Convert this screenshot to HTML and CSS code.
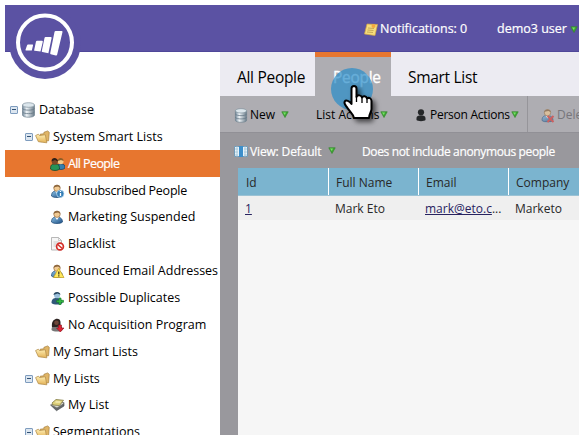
FILE: index.html
```
<!DOCTYPE html>
<html lang="en">
<head>
<meta charset="utf-8">
<title>Database</title>
<link rel="stylesheet" href="styles.css">
</head>
<body>
<svg class="defs" aria-hidden="true">
  <defs>
    <linearGradient id="metal"><stop offset="0" stop-color="#71879a"/><stop offset=".35" stop-color="#f0f5f8"/><stop offset="1" stop-color="#677987"/></linearGradient>
    <linearGradient id="gold" x2="0" y2="1"><stop offset="0" stop-color="#fff0b5"/><stop offset="1" stop-color="#e3b156"/></linearGradient>
    <linearGradient id="coat" x2="1" y2="1"><stop offset="0" stop-color="#8bc1e4"/><stop offset="1" stop-color="#1c4d84"/></linearGradient>
    <symbol id="db" viewBox="0 0 14 16"><path d="M1 3v10c0 3 12 3 12 0V3z" fill="url(#metal)" stroke="#718490" stroke-width=".7"/><ellipse cx="7" cy="3" rx="6" ry="2.3" fill="#dce6ec" stroke="#81929e" stroke-width=".7"/><path d="M1 6.500c1 2.200 11 2.200 12 0M1 10c1 2.200 11 2.200 12 0" fill="none" stroke="#637684" stroke-width=".8"/></symbol>
    <symbol id="folder" viewBox="0 0 16 14"><path d="M6 12 5.500 4l4-.5V2l4-1.500 1.700 1.500-.7 9z" fill="#e0b566" stroke="#a07a38" stroke-width=".7"/><path d="M.6 5.500 3.500 4l1.200 1.400L11 4.600l1.600 8.600-9-1.200z" fill="url(#gold)" stroke="#b18b48" stroke-width=".8"/></symbol>
    <symbol id="person" viewBox="0 0 14 14"><path d="M1 12c0-4 2-5 5-5s6 1 6 5c-2 2-9 2-11 0z" fill="url(#coat)" stroke="#194572" stroke-width=".7"/><path d="m4.500 7 2 3 2-3z" fill="#fff"/><circle cx="6.500" cy="4.200" r="3.200" fill="#f1ca93" stroke="#80572d" stroke-width=".6"/><path d="M3 4C3 .4 9.500-.4 10 3.800L7.500 2.500 4.500 3z" fill="#89633a"/></symbol>
    <symbol id="people" viewBox="0 0 15 14"><path d="M7 11c0-3 1-4 4-4s4 1 4 4c-2 2-6 2-8 0z" fill="#367fae" stroke="#173e61" stroke-width=".7"/><circle cx="10.700" cy="4.500" r="2.800" fill="#f4c888"/><path d="M7.700 4c0-4 6-4 6 0L11 3z" fill="#8e5e27"/><path d="M.5 12c0-4 1-5 4.500-5s4.500 1 4.500 5c-2 2-7 2-9 0z" fill="#269357" stroke="#103f29" stroke-width=".7"/><circle cx="4.800" cy="4.800" r="3" fill="#804927"/><path d="M1.500 4.500c0-5 6.500-4 6.500 0L5 3z" fill="#302018"/></symbol>
    <symbol id="info" viewBox="0 0 14 14"><use href="#person"/><circle cx="9.800" cy="9.800" r="3.700" fill="#367eb6" stroke="#c5e3f5" stroke-width=".7"/><path d="M10 9v3M10 7v1" stroke="#fff" stroke-width="1.300"/></symbol>
    <symbol id="blocked" viewBox="0 0 14 14"><path d="M1 .5h7l3 3V13H1z" fill="#f6f6f6" stroke="#a7a7a7" stroke-width=".8"/><path d="M8 .5v3h3M3 5h5M3 7h5M3 9h3" fill="none" stroke="#b9b9b9" stroke-width=".7"/><circle cx="9.500" cy="9.500" r="3.400" fill="#fff" stroke="#d52f2a" stroke-width="1.700"/><path d="m7.300 7.500 4.400 4" stroke="#d52f2a" stroke-width="1.500"/></symbol>
    <symbol id="warning" viewBox="0 0 14 14"><use href="#person"/><path d="M8.200 4.300 13.500 13.500H3z" fill="#ffe95c" stroke="#c7a52c" stroke-width=".8"/><path d="M8.300 7.500v3M8.300 11.200v1.300" stroke="#453b20" stroke-width="1.300"/></symbol>
    <symbol id="add" viewBox="0 0 14 14"><path d="M1 12c0-4 2-5 5-5s6 1 6 5c-2 2-9 2-11 0z" fill="#315879"/><circle cx="6.500" cy="4.200" r="3" fill="#9bc0dc"/><path d="M3 4C3 .4 9.500-.4 10 3.800L7 2.500z" fill="#29465e"/><path d="M8.500 7h2v2.300H13v2h-2.500v2.400h-2v-2.400H6.200v-2h2.300z" fill="#35ba43" stroke="#137925" stroke-width=".6"/></symbol>
    <symbol id="drop" viewBox="0 0 14 14"><path d="M1 12c0-4 2-5 5-5s6 1 6 5c-2 2-9 2-11 0z" fill="#777"/><path d="M1.500 9C0-.5 10-1.500 10 4v4L6 9z" fill="#2d2321"/><circle cx="6" cy="4.800" r="2.300" fill="#6e4639"/><path d="M8 7h3v3h2.500L9.800 14 6 10h2z" fill="#df2333" stroke="#8b121d" stroke-width=".6"/></symbol>
    <symbol id="list" viewBox="0 0 15 13"><path d="m.5 6.500 6 5.700L14 7.500V4L7 8z" fill="#65696b" stroke="#45494b" stroke-width=".6"/><path d="m1 6.500 6 3L14 5l-3-2z" fill="#d8d8d0" stroke="#66675e" stroke-width=".7"/><path d="m2 4.500 4-3.500 7.500.800L9.500 7 3 6.500z" fill="#dfd27c" stroke="#827b43" stroke-width=".8"/><path d="M5.500 3.500h5" stroke="#fff9ce"/></symbol>
    <symbol id="arrow" viewBox="0 0 8 7"><path d="M.8.800h6.400L4 6.500z" fill="#3fa633" stroke="#348a2d" stroke-width=".7"/><path d="M2 1.600h3L3.800 4z" fill="#79e268"/></symbol>
    <symbol id="note" viewBox="0 0 14 13"><path d="m3 1 10.500 .500-2.500 11-10.500-1.500z" fill="#f6dc7c" stroke="#d4a642" stroke-width=".7"/><path d="m4 5 6 .500M3.500 7l6 .500M3 9l6 .500" stroke="#b39346" stroke-width=".7"/><circle cx="9.500" cy="3" r="2" fill="#f4a93f"/></symbol>
    <symbol id="cols" viewBox="0 0 14 13"><path d="M.5 1.500h13v10H.5z" fill="#e8f3fa" stroke="#739bb7"/><path d="M5 1h4v11H5z" fill="#3d8fcb"/><path d="M3 1v11M11 1v11M1 4h3M1 7h3M1 10h3M10 4h3M10 7h3M10 10h3" stroke="#9fc2d6" stroke-width=".8"/></symbol>
    <symbol id="silhouette" viewBox="0 0 10 13"><circle cx="5" cy="3.300" r="3.100" fill="#252729"/><path d="M.5 11V9c0-2 2-2.500 4.500-2.500S9.500 7 9.500 9v2c-1 1.500-8 1.500-9 0z" fill="#252729"/></symbol>
    <symbol id="remove" viewBox="0 0 14 14"><use href="#person"/><path d="m6.500 7.500 6 6m0-6-6 6" stroke="#dd3734" stroke-width="1.900"/></symbol>
  </defs>
</svg>

<div class="app">
  <header class="topbar">
    <svg class="logo" viewBox="0 0 76 74"><circle cx="40" cy="38" r="36" fill="#5b52a3"/><circle cx="40" cy="37.500" r="27" fill="none" stroke="#fff" stroke-width="4"/><g fill="#fff"><path d="M22 40.500q.3-1 1-1h4.500q.8 0 .5 1l-1.200 5h-5.800q-.7-.1-.5-.8z"/><path d="M31 36.500q.3-.8 1-.8h5q1 0 .8 1L35.500 46.500l-5.800-.7q-.8-.1-.5-.9z"/><path d="M39.500 33q.3-1 1-1h5.300q1 0 .8 1l-3.200 15.300-6-1.300q-.8-.2-.6-1z"/><path d="M49.500 27q.2-1 1.200-1h6q1 0 .8 1L52.200 49.500q-.2 1.300-1.400 1l-5-1.200q-.8-.3-.6-1z"/></g></svg>
    <svg class="note"><use href="#note"/></svg>
    <span class="notifications">Notifications: 0</span>
    <span class="user">demo3 user</span>
    <svg class="arrow"><use href="#arrow"/></svg>
  </header>
  <div class="body">
    <nav class="tree">
      <div class="node root"><i class="toggle"></i><svg class="icon"><use href="#db"/></svg><span>Database</span></div>
      <div class="node group"><i class="toggle"></i><svg class="icon"><use href="#folder"/></svg><span>System Smart Lists</span></div>
      <div class="node leaf selected"><svg class="icon"><use href="#people"/></svg><span>All People</span></div>
      <div class="node leaf tight"><svg class="icon"><use href="#info"/></svg><span>Unsubscribed People</span></div>
      <div class="node leaf"><svg class="icon"><use href="#person"/></svg><span>Marketing Suspended</span></div>
      <div class="node leaf"><svg class="icon"><use href="#blocked"/></svg><span>Blacklist</span></div>
      <div class="node leaf"><svg class="icon"><use href="#warning"/></svg><span>Bounced Email Addresses</span></div>
      <div class="node leaf"><svg class="icon"><use href="#add"/></svg><span>Possible Duplicates</span></div>
      <div class="node leaf"><svg class="icon"><use href="#drop"/></svg><span>No Acquisition Program</span></div>
      <div class="node group closed"><svg class="icon"><use href="#folder"/></svg><span>My Smart Lists</span></div>
      <div class="node group"><i class="toggle"></i><svg class="icon"><use href="#folder"/></svg><span>My Lists</span></div>
      <div class="node leaf"><svg class="icon"><use href="#list"/></svg><span>My List</span></div>
      <div class="node group"><i class="toggle"></i><svg class="icon"><use href="#folder"/></svg><span>Segmentations</span></div>
    </nav>
    <main class="main">
      <div class="tabs">
        <div class="tab first">All People</div>
        <div class="tab active"><span class="tab-label">People</span>
          <svg class="pointer" viewBox="0 0 60 64"><defs><filter id="shade" x="-30%" y="-30%" width="170%" height="170%"><feDropShadow dx="3" dy="3" stdDeviation="2.500" flood-opacity=".6"/></filter></defs><circle cx="21" cy="22" r="21" fill="#268cc9" opacity=".7"/><path d="M20.500 21.500c0-3.500 5-3.500 5 0v8.500c1-2.500 5-2 5.500 .5 1-2 4.500-1.500 5 1 2-1.500 4.500 0 4.500 2.500v8c0 3-2 4-2.500 9H23c-.5-4-4-6-6.500-10-2-3-4-4.500-2.800-6.500s4.800-.5 6.800 2.500z" fill="#fff" stroke="#000" stroke-width="2" stroke-linejoin="round" filter="url(#shade)"/><path d="M25.500 29v6M31 31v5M36 32v4" stroke="#000" stroke-width="1.300"/></svg>
        </div>
        <div class="tab last">Smart List</div>
      </div>
      <div class="toolbar">
        <svg class="icon"><use href="#db"/></svg><span class="t-new">New</span><svg class="arrow"><use href="#arrow"/></svg>
        <span class="t-list">List Actions</span><svg class="arrow"><use href="#arrow"/></svg>
        <svg class="figure"><use href="#silhouette"/></svg><span class="t-person">Person Actions</span><svg class="arrow"><use href="#arrow"/></svg>
        <div class="delete"><svg class="icon"><use href="#remove"/></svg><span>Delete</span></div>
      </div>
      <div class="viewbar"><svg class="icon"><use href="#cols"/></svg><span class="t-view">View: Default</span><svg class="arrow"><use href="#arrow"/></svg><span class="t-note">Does not include anonymous people</span></div>
      <div class="table">
        <div class="tr head"><div>Id</div><div>Full Name</div><div>Email</div><div>Company</div></div>
        <div class="tr row"><div><a>1</a></div><div>Mark Eto</div><div><a>mark@eto.c</a>...</div><div>Marketo</div></div>
      </div>
    </main>
  </div>
</div>
</body>
</html>
```
FILE: styles.css
```
* { box-sizing: border-box; }
body { margin: 0; background: #fff; font: 12.5px/18px "Open Sans", "Noto Sans", sans-serif; color: #000; }
svg { flex: none; }
.defs { position: absolute; width: 0; height: 0; }
.app { margin: 5px; width: 574px; height: 430px; overflow: hidden; }
.topbar { position: relative; display: flex; align-items: center; height: 47px; padding: 2px 0 0 359px; background: #5b52a3; color: #fff; white-space: nowrap; border-bottom: 1px solid #4f4799; -webkit-text-stroke: .2px #fff; }
.logo { position: absolute; left: 0; top: 0; width: 76px; height: 74px; }
.note { width: 14px; height: 13px; }
.notifications { width: 116px; margin-left: 2px; }
.user { width: 73px; margin-left: 1px; }
.arrow { width: 8px; height: 7px; }
.body { display: flex; height: 383px; }
.tree { width: 215px; padding-top: 44.500px; }
.node { display: flex; align-items: center; height: 26.870px; white-space: nowrap; }
.node .icon { width: 15px; height: 14px; margin-right: 3px; }
.root { padding-left: 5px; }
.root .icon { height: 16px; }
.group { padding-left: 20px; }
.closed { padding-left: 30px; }
.leaf { padding-left: 45px; }
.toggle { flex: none; width: 8px; height: 8px; margin-right: 2px; border: 1px solid #7e9cbe; border-radius: 1px; background: linear-gradient(#315174, #315174) center / 4px 1px no-repeat, #dce6f0; }
.root .toggle { margin-right: 3px; }
.tight { letter-spacing: -.25px; }
.selected { background: #e7762f; color: #fff; letter-spacing: -.6px; -webkit-text-stroke: .2px #fff; }
.main { flex: 1; min-width: 0; display: flex; flex-direction: column; background: #99989d; }
.tabs { display: flex; height: 44px; font-size: 15.500px; letter-spacing: -.3px; line-height: 20px; background: #ecebf2; white-space: nowrap; }
.tab { display: flex; align-items: center; padding-top: 6px; }
.first { width: 95px; padding-left: 17px; }
.active { position: relative; width: 76px; padding: 1px 0 0 18px; border-top: 5px solid #e7762f; background: #aeadb2; color: #fff; -webkit-text-stroke: .3px #fff; }
.pointer { position: absolute; z-index: 2; left: 16px; top: 10px; width: 60px; height: 64px; }
.last { padding-left: 17px; }
.toolbar { display: flex; align-items: center; height: 36px; padding: 2px 0 0 14px; background: #aeadb2; white-space: nowrap; font-size: 12px; }
.toolbar .icon, .viewbar .icon { width: 14px; height: 15px; margin-right: 2px; }
.t-new { width: 31px; }
.t-list { width: 64px; margin-left: 27px; }
.toolbar > .arrow, .viewbar > .arrow { margin-top: -2px; }
.figure { width: 10px; height: 13px; margin: 0 4px 0 28px; }
.t-person { width: 81px; letter-spacing: -.25px; }
.toolbar span, .toolbar svg { flex: none; }
.delete { flex: none; display: flex; align-items: center; align-self: stretch; margin: -2px 0 0 8px; padding: 2px 0 0 13px; border-left: 1px solid #96959a; color: #77767b; }
.delete .icon { opacity: .65; }
.viewbar { display: flex; align-items: center; height: 36px; padding: 2px 0 0 14px; border-top: 1px solid #919096; color: #fff; white-space: nowrap; font-size: 12px; -webkit-text-stroke: .2px #fff; }
.t-view { width: 78px; letter-spacing: -.15px; }
.t-note { margin-left: 26px; letter-spacing: -.36px; }
.table { flex: 1; margin-left: 18px; background: #f6f6f6; font-size: 12px; }
.tr { display: grid; grid-template-columns: 90px 90px 90px 1fr; color: #282828; }
.tr div { display: flex; align-items: center; padding: 2px 0 0 7px; }
.head { height: 28px; background: #7bb4cf; border-bottom: 1px solid #9bc2d4; }
.head div { border-left: 1px solid #fff; padding-top: 3px; }
.head div:first-child { border-left: 0; padding-left: 8px; }
.row { height: 24px; background: #efefef; }
.row a { color: #28235f; text-decoration: underline; }
```
